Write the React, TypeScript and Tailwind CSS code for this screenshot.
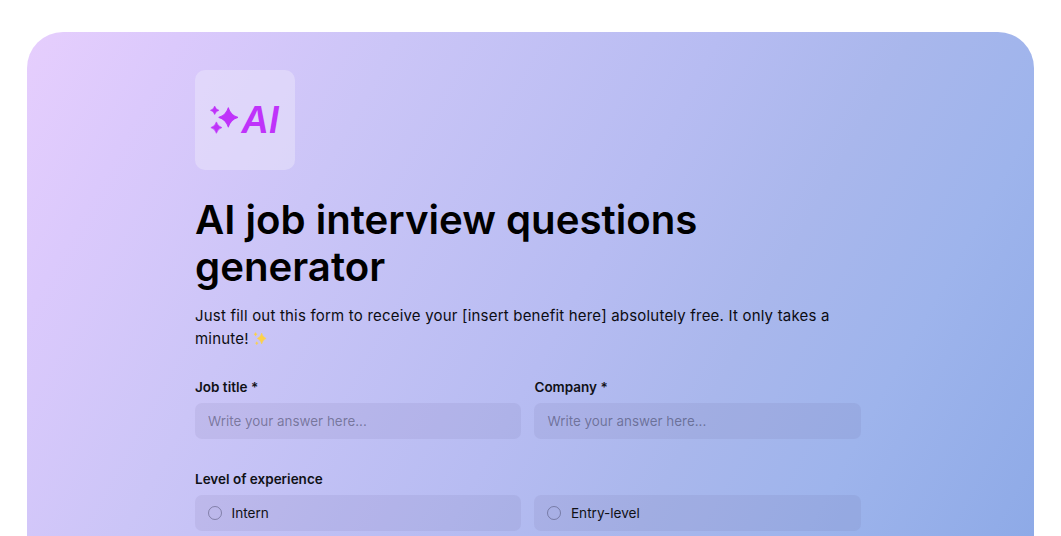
import {ReactNode, useState} from "react";

const LEVELS = ['Intern', 'Entry-level']

function Star({ cx, cy, rx, ry }: { cx: number, cy: number, rx: number, ry: number }) {
  const kx = rx * 0.23
  const ky = ry * 0.23
  return (
    <path
      d={`M${cx} ${cy - ry}Q${cx + kx} ${cy - ky} ${cx + rx} ${cy}Q${cx + kx} ${cy + ky} ${cx} ${cy + ry}Q${cx - kx} ${cy + ky} ${cx - rx} ${cy}Q${cx - kx} ${cy - ky} ${cx} ${cy - ry}Z`}
      fill="currentColor"
      stroke="currentColor"
      strokeWidth={rx * 0.12}
      strokeLinejoin="round"
    />
  )
}

function Logo() {
  return (
    <div className="flex h-[100px] w-[100px] items-center rounded-[10px] bg-[#eee8fa]/45 pl-[15px] text-[#bf33fa]">
      <svg width="28" height="30" viewBox="0 0 28 30" className="flex-none">
        <Star cx={18.3} cy={12.4} rx={9.3} ry={9.5} />
        <Star cx={4.7} cy={5.3} rx={4.3} ry={4.3} />
        <Star cx={6.4} cy={22.6} rx={5.5} ry={5.7} />
      </svg>
      <span className="ml-[3.5px] text-[37.5px] leading-none font-semibold italic">AI</span>
    </div>
  )
}

function Sparkles() {
  return (
    <svg width="14" height="14" viewBox="0 0 14 14" className="ml-[4px] inline-block align-[-2px] text-[#fdd147]">
      <Star cx={8.7} cy={6.5} rx={4.4} ry={5.4} />
      <Star cx={2.6} cy={2.2} rx={1.7} ry={2} />
      <Star cx={3.8} cy={11.2} rx={1.5} ry={1.7} />
    </svg>
  )
}

function Label({ children }: { children: ReactNode }) {
  return <div className="mb-[6.5px] text-[13.5px] leading-5 font-semibold text-[#101116]">{children}</div>
}

function TextField({ label }: { label: string }) {
  const [value, setValue] = useState('')

  return (
    <label className="block">
      <Label>{label}</Label>
      <input
        value={value}
        onChange={(e) => setValue(e.target.value)}
        placeholder="Write your answer here..."
        className="block h-[35.5px] w-full rounded-[7px] bg-[#5a4b82]/9 px-[13px] text-[13.4px] text-[#101116] outline-none placeholder:text-[#26263c]/45"
      />
    </label>
  )
}

export default function App() {
  const [level, setLevel] = useState('')

  return (
    <div className="h-[536px] overflow-hidden bg-white px-[27px] pt-[32px] font-['Inter',sans-serif]">
      <div className="h-[504px] overflow-hidden rounded-t-[36px] bg-[linear-gradient(119deg,#e6cefd_0%,#dbc9fc_12%,#cbc5f7_29%,#b7bcf2_54%,#a9b7ec_69%,#9eb4ec_82%,#8eaae7_100%)] pt-[37.5px]">
        <div className="ml-[168px] w-[665.6px]">
          <Logo />
          <h1 className="mt-[27.5px] text-[40.2px] leading-[46.6px] font-semibold text-black">
            AI job interview questions<br />generator
          </h1>
          <p className="mt-[13.9px] text-[15px] leading-[23.3px] tracking-[0.2px] text-[#0c0c12]">
            Just fill out this form to receive your [insert benefit here] absolutely free. It only takes a
            minute!<Sparkles />
          </p>
          <div className="mt-[26px] grid grid-cols-2 gap-x-[13.3px]">
            <TextField label="Job title *" />
            <TextField label="Company *" />
          </div>
          <div className="mt-[30.3px]">
            <Label>Level of experience</Label>
            <div className="grid grid-cols-2 gap-x-[13.3px]">
              {LEVELS.map((item) => (
                <button
                  key={item}
                  type="button"
                  onClick={() => setLevel(item)}
                  className="flex h-[35.5px] items-center gap-[9.5px] rounded-[7px] bg-[#5a4b82]/9 px-[13px] text-[13.6px] text-[#101116]"
                >
                  <span className="flex h-[14px] w-[14px] items-center justify-center rounded-full border border-[#3c3c5a]/45">
                    {level === item && <span className="h-2 w-2 rounded-full bg-[#3c3c5a]" />}
                  </span>
                  {item}
                </button>
              ))}
            </div>
          </div>
        </div>
      </div>
    </div>
  )
}
